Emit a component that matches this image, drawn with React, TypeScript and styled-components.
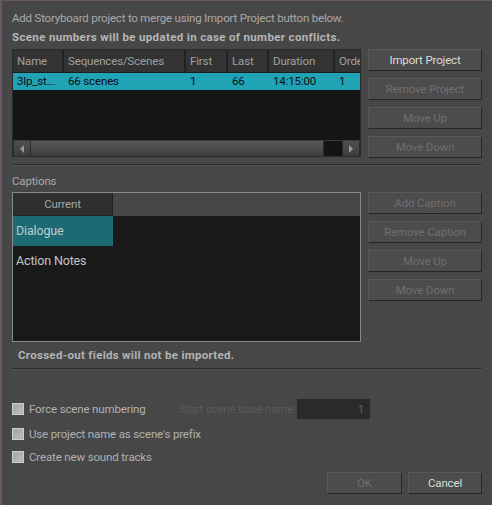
import React from 'react';
import styled, { createGlobalStyle } from 'styled-components';

const GlobalStyle = createGlobalStyle`
  body {
    margin: 0;
    background: #ffffff;
    font-family: Roboto, 'Noto Sans', 'DejaVu Sans', sans-serif;
  }
`;

const Dialog = styled.div`
  width: 492px;
  height: 505px;
  box-sizing: border-box;
  background: #474747;
  border-top: 1px solid #6a5866;
  border-left: 2px solid #6a5866;
  padding: 8px 10px 0 10px;
  font-size: 11.5px;
  letter-spacing: -0.15px;
  color: #a9a9a9;
`;

const Intro = styled.div<{ $bold?: boolean }>`
  height: 19px;
  line-height: 19px;
  font-weight: ${(p) => (p.$bold ? 700 : 400)};
  letter-spacing: ${(p) => (p.$bold ? '0.35px' : '-0.2px')};
  color: ${(p) => (p.$bold ? '#b6b6b6' : '#a9a9a9')};
  white-space: nowrap;
`;

const Section = styled.div`
  display: flex;
  gap: 7px;
  margin-top: 2px;
`;

const ButtonColumn = styled.div`
  display: flex;
  flex-direction: column;
  gap: 7px;
  width: 114px;
`;

const Button = styled.div<{ $disabled?: boolean; $w?: number }>`
  box-sizing: border-box;
  height: 22px;
  width: ${(p) => (p.$w ? `${p.$w}px` : '100%')};
  display: flex;
  align-items: center;
  justify-content: center;
  background: #4c4c4c;
  border: 1px solid #262626;
  border-top-color: #5a5a5a;
  border-left-color: #575757;
  color: ${(p) => (p.$disabled ? '#6f6f6f' : '#dcdcdc')};
  white-space: nowrap;
`;

const Table = styled.div`
  width: 349px;
  height: 108px;
  box-sizing: border-box;
  background: #151515;
  border: 1px solid #2a2a2a;
  display: flex;
  flex-direction: column;
  overflow: hidden;
`;

const HeaderRow = styled.div`
  display: flex;
  height: 22px;
  background: #333333;
  border-bottom: 1px solid #1d1d1d;
`;

const HeaderCell = styled.div<{ $w: number }>`
  width: ${(p) => p.$w}px;
  flex: none;
  box-sizing: border-box;
  padding-left: 4px;
  line-height: 22px;
  border-right: 2px solid #222;
  color: #a0a0a0;
  white-space: nowrap;
  overflow: hidden;
  &:last-child {
    border-right: none;
  }
`;

const DataRow = styled.div`
  display: flex;
  height: 17px;
  background: #21a3b6;
  color: #0d0d0d;
`;

const DataCell = styled.div<{ $w: number }>`
  width: ${(p) => p.$w}px;
  flex: none;
  box-sizing: border-box;
  padding-left: 4px;
  line-height: 17px;
  white-space: nowrap;
  overflow: hidden;
`;

const Spacer = styled.div`
  flex: 1;
`;

const ScrollBar = styled.div`
  display: flex;
  height: 15px;
  background: #2a2a2a;
  border-top: 1px solid #3a3a3a;
`;

const ScrollArrow = styled.div`
  width: 16px;
  display: flex;
  align-items: center;
  justify-content: center;
  background: linear-gradient(#505050, #3c3c3c);
  border-right: 1px solid #2a2a2a;
  border-left: 1px solid #2a2a2a;
`;

const ScrollThumb = styled.div`
  width: 292px;
  background: linear-gradient(#5a5a5a, #3e3e3e);
  border-right: 1px solid #2a2a2a;
`;

const ScrollTrack = styled.div`
  flex: 1;
  background: #141414;
`;

const Separator = styled.div<{ $top: number }>`
  margin-top: ${(p) => p.$top}px;
  height: 0;
  border-top: 1px solid #2e2e2e;
  border-bottom: 1px solid #525252;
`;

const Label = styled.div`
  margin-top: 6px;
  height: 18px;
  line-height: 18px;
  color: #a8a8a8;
`;

const CaptionBox = styled.div`
  width: 349px;
  height: 150px;
  box-sizing: border-box;
  border: 1px solid #8a8a8a;
  background: #191919;
  display: flex;
  flex-direction: column;
`;

const CaptionHeader = styled.div`
  height: 23px;
  background: #474747;
  display: flex;
`;

const CaptionHeaderCell = styled.div`
  width: 100px;
  box-sizing: border-box;
  background: #2f2f2f;
  border-right: 1px solid #1f1f1f;
  border-bottom: 1px solid #222;
  text-align: center;
  line-height: 22px;
  color: #a5a5a5;
`;

const CaptionRow = styled.div<{ $selected?: boolean }>`
  width: 100px;
  height: 30px;
  box-sizing: border-box;
  padding-left: 3px;
  line-height: 30px;
  font-size: 12.5px;
  background: ${(p) => (p.$selected ? '#1d6974' : 'transparent')};
  color: ${(p) => (p.$selected ? '#b9cdd1' : '#c4c4c4')};
  white-space: nowrap;
`;

const Note = styled.div`
  margin-top: 4px;
  padding-left: 6px;
  height: 18px;
  line-height: 18px;
  font-weight: 700;
  letter-spacing: 0.3px;
  color: #b4b4b4;
`;

const Options = styled.div`
  margin-top: 28px;
  display: flex;
  flex-direction: column;
  gap: 7px;
`;

const OptionRow = styled.div<{ $h?: number }>`
  display: flex;
  align-items: center;
  height: ${(p) => p.$h ?? 16}px;
`;

const CheckBox = styled.div`
  width: 12px;
  height: 12px;
  box-sizing: border-box;
  border: 1px solid #cfcfcf;
  background: linear-gradient(135deg, #a0a0a0, #c2c2c2);
  box-shadow: inset 0 0 0 1px #b0b0b0;
  margin-right: 5px;
  flex: none;
`;

const OptionText = styled.span<{ $w?: number; $disabled?: boolean }>`
  width: ${(p) => (p.$w ? `${p.$w}px` : 'auto')};
  color: ${(p) => (p.$disabled ? '#5b5b5b' : '#b1b1b1')};
  white-space: nowrap;
  flex: none;
`;

const NumberInput = styled.div`
  width: 73px;
  height: 20px;
  box-sizing: border-box;
  background: #2a2a2a;
  color: #5f5f5f;
  text-align: right;
  padding-right: 6px;
  line-height: 20px;
`;

const Footer = styled.div`
  margin-top: 7px;
  display: flex;
  justify-content: flex-end;
  gap: 6px;
`;

const columns = [
  { name: 'Name', w: 51, value: '3lp_st...' },
  { name: 'Sequences/Scenes', w: 122, value: '66 scenes' },
  { name: 'First', w: 42, value: '1' },
  { name: 'Last', w: 41, value: '66' },
  { name: 'Duration', w: 66, value: '14:15:00' },
  { name: 'Orde', w: 27, value: '1' }
];

const Triangle: React.FC<{ dir: 'left' | 'right' }> = ({ dir }) => (
  <svg width="6" height="8" viewBox="0 0 6 8">
    <polygon
      points={dir === 'left' ? '5,0 5,8 1,4' : '1,0 1,8 5,4'}
      fill="#9a9a9a"
    />
  </svg>
);

const App: React.FC = () => {
  return (
    <>
      <GlobalStyle />
      <Dialog>
        <Intro>Add Storyboard project to merge using Import Project button below.</Intro>
        <Intro $bold>Scene numbers will be updated in case of number conflicts.</Intro>

        <Section>
          <Table>
            <HeaderRow>
              {columns.map((c) => (
                <HeaderCell key={c.name} $w={c.w}>
                  {c.name}
                </HeaderCell>
              ))}
            </HeaderRow>
            <DataRow>
              {columns.map((c) => (
                <DataCell key={c.name} $w={c.w}>
                  {c.value}
                </DataCell>
              ))}
            </DataRow>
            <Spacer />
            <ScrollBar>
              <ScrollArrow>
                <Triangle dir="left" />
              </ScrollArrow>
              <ScrollThumb />
              <ScrollTrack />
              <ScrollArrow>
                <Triangle dir="right" />
              </ScrollArrow>
            </ScrollBar>
          </Table>
          <ButtonColumn>
            <Button>Import Project</Button>
            <Button $disabled>Remove Project</Button>
            <Button $disabled>Move Up</Button>
            <Button $disabled>Move Down</Button>
          </ButtonColumn>
        </Section>

        <Separator $top={6} />

        <Label>Captions</Label>

        <Section>
          <CaptionBox>
            <CaptionHeader>
              <CaptionHeaderCell>Current</CaptionHeaderCell>
            </CaptionHeader>
            <CaptionRow $selected>Dialogue</CaptionRow>
            <CaptionRow>Action Notes</CaptionRow>
          </CaptionBox>
          <ButtonColumn>
            <Button $disabled>Add Caption</Button>
            <Button $disabled>Remove Caption</Button>
            <Button $disabled>Move Up</Button>
            <Button $disabled>Move Down</Button>
          </ButtonColumn>
        </Section>

        <Note>Crossed-out fields will not be imported.</Note>

        <Separator $top={4} />

        <Options>
          <OptionRow $h={21}>
            <CheckBox />
            <OptionText $w={150}>Force scene numbering</OptionText>
            <OptionText $w={118} $disabled>
              Start scene base name
            </OptionText>
            <NumberInput>1</NumberInput>
          </OptionRow>
          <OptionRow>
            <CheckBox />
            <OptionText>Use project name as scene's prefix</OptionText>
          </OptionRow>
          <OptionRow>
            <CheckBox />
            <OptionText>Create new sound tracks</OptionText>
          </OptionRow>
        </Options>

        <Footer>
          <Button $disabled $w={75}>
            OK
          </Button>
          <Button $w={74}>Cancel</Button>
        </Footer>
      </Dialog>
    </>
  );
};

export default App;
